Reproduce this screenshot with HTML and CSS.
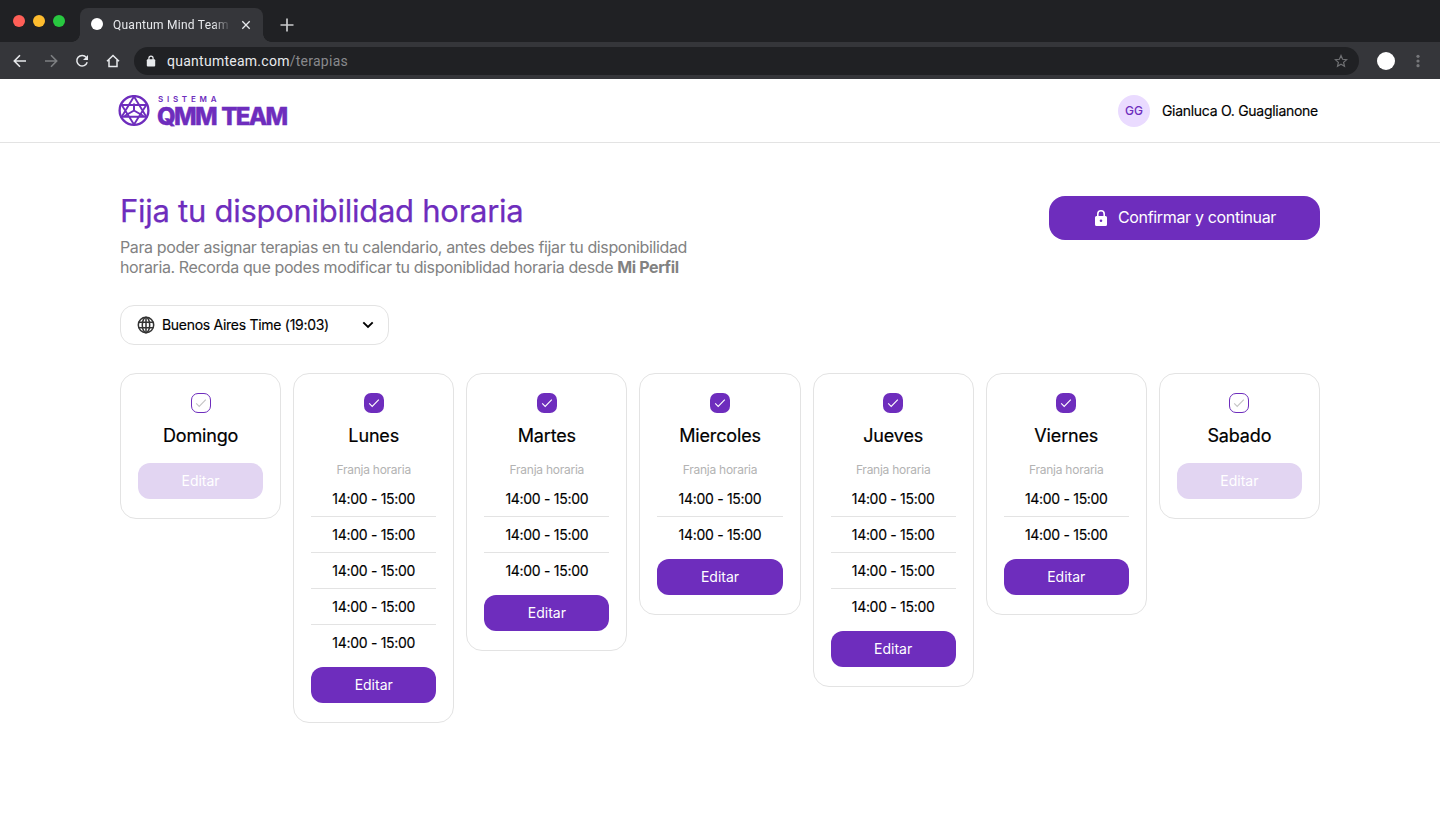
FILE: index.html
```
<!DOCTYPE html>
<html lang="es">
<head>
<meta charset="utf-8">
<title>Quantum Mind Team</title>
<link rel="stylesheet" href="styles.css">
</head>
<body>
<svg class="defs" width="0" height="0" aria-hidden="true">
  <symbol id="tick" viewBox="0 0 12 12"><path d="M1.2 6.4l3 3L10.8 2.6" fill="none" stroke="currentColor" stroke-width="1.1"/></symbol>
  <symbol id="lock" viewBox="0 0 16 20"><path fill="currentColor" fill-rule="evenodd" d="M4 8V6a4 4 0 0 1 8 0v2h.5A1.500 1.500 0 0 1 14 9.500v7a1.500 1.500 0 0 1-1.500 1.500h-9A1.500 1.500 0 0 1 2 16.500v-7A1.500 1.500 0 0 1 3.500 8zM5.600 8h4.800V6a2.400 2.400 0 0 0-4.800 0zM8 11.500a1.300 1.300 0 1 0 0 2.600 1.300 1.300 0 0 0 0-2.600z"/></symbol>
</svg>

<div class="tabs">
  <div class="lights"><i class="red"></i><i class="yellow"></i><i class="green"></i></div>
  <div class="tab">
    <i class="favicon"></i>
    <span class="tab-title">Quantum Mind Team</span>
    <svg class="tab-close" width="10" height="10" viewBox="0 0 10 10"><path d="M1.300 1.300l7.400 7.400M8.700 1.300L1.300 8.700" stroke="#e8eaed" stroke-width="1.300"/></svg>
  </div>
  <svg class="tab-new" width="14" height="14" viewBox="0 0 14 14"><path d="M7 .5v13M.5 7h13" stroke="#c9cacc" stroke-width="1.700"/></svg>
</div>
<div class="toolbar">
  <div class="nav">
    <svg width="14" height="14" viewBox="0 0 14 14"><path d="M13 7H1.800M7 1.300L1.300 7 7 12.700" fill="none" stroke="#e8eaed" stroke-width="1.600"/></svg>
    <svg width="14" height="14" viewBox="0 0 14 14"><path d="M1 7h11.200M7 1.300L12.700 7 7 12.700" fill="none" stroke="#7e8083" stroke-width="1.600"/></svg>
    <svg width="14" height="14" viewBox="0 0 14 14"><path d="M11.300 3.400A5.300 5.300 0 1 0 12.200 8.300" fill="none" stroke="#e8eaed" stroke-width="1.500"/><path d="M13 1v5H8z" fill="#e8eaed"/></svg>
    <svg width="14" height="14" viewBox="0 0 14 14"><path d="M1 7.200L7 1.500l6 5.700M3 6v6.500h8V6" fill="none" stroke="#e8eaed" stroke-width="1.500"/></svg>
  </div>
  <div class="address">
    <svg width="10" height="12" viewBox="0 0 10 12"><path d="M2.900 5V3.200a2.100 2.100 0 0 1 4.200 0V5" fill="none" stroke="#e8eaed" stroke-width="1.200"/><rect x=".8" y="4.300" width="8.400" height="7.200" rx="1" fill="#e8eaed"/></svg>
    <span class="url">quantumteam.com<span class="path">/terapias</span></span>
    <svg class="star" width="14" height="14" viewBox="0 0 14 14"><path d="M7 1.600l1.600 3.700 4 .4-3 2.700.9 3.900L7 10.200l-3.500 2.100.9-3.900-3-2.700 4-.4z" fill="none" stroke="#6f7073" stroke-width="1.200"/></svg>
  </div>
  <i class="profile"></i>
  <svg class="kebab" width="4" height="14" viewBox="0 0 4 14" fill="#77787b"><circle cx="2" cy="2.300" r="1.600"/><circle cx="2" cy="7" r="1.600"/><circle cx="2" cy="11.700" r="1.600"/></svg>
</div>

<header class="header">
  <div class="logo">
    <svg width="32" height="32" viewBox="0 0 32 32" fill="none" stroke="#6e2dbd">
      <circle cx="16" cy="15.500" r="14.400" stroke-width="2.300"/>
      <path d="M16 1.500L28.300 21.800H3.700zM16 29.500L3.700 10h24.600z" stroke-width="1.900"/>
      <path d="M16 8.500v7L6.500 21M16 15.500l9.500 5.500" stroke-width="2"/>
    </svg>
    <div class="wordmark"><span class="over">SISTEMA</span><span class="brand">QMM TEAM</span></div>
  </div>
  <div class="user"><span class="avatar">GG</span><span class="user-name">Gianluca O. Guaglianone</span></div>
</header>

<main class="main">
  <div class="intro">
    <div>
      <h1 class="title">Fija tu disponibilidad horaria</h1>
      <p class="lead">Para poder asignar terapias en tu calendario, antes debes fijar tu disponibilidad<br>horaria. Recorda que podes modificar tu disponiblidad horaria desde <b>Mi Perfil</b></p>
    </div>
    <button class="confirm"><svg width="16" height="20"><use href="#lock"/></svg><span>Confirmar y continuar</span></button>
  </div>

  <button class="zone">
    <svg width="18" height="18" viewBox="0 0 18 18" fill="none" stroke="#333" stroke-width="1.500"><circle cx="9" cy="9" r="7.700"/><ellipse cx="9" cy="9" rx="3.700" ry="7.700"/><path d="M9 1.300v15.400M1.800 6.300h14.400M1.800 11.700h14.400"/></svg>
    <span class="zone-name">Buenos Aires Time (19:03)</span>
    <svg class="chevron" width="12" height="8" viewBox="0 0 12 8"><path d="M1.300 1.300L6 6l4.700-4.700" fill="none" stroke="#000" stroke-width="1.900"/></svg>
  </button>

  <section class="week">
    <article class="day off"><span class="check"><svg width="12" height="12"><use href="#tick"/></svg></span><h2>Domingo</h2><button class="edit">Editar</button></article>
    <article class="day"><span class="check"><svg width="12" height="12"><use href="#tick"/></svg></span><h2>Lunes</h2><p class="range">Franja horaria</p><ul class="slots"><li>14:00 - 15:00</li><li>14:00 - 15:00</li><li>14:00 - 15:00</li><li>14:00 - 15:00</li><li>14:00 - 15:00</li></ul><button class="edit">Editar</button></article>
    <article class="day"><span class="check"><svg width="12" height="12"><use href="#tick"/></svg></span><h2>Martes</h2><p class="range">Franja horaria</p><ul class="slots"><li>14:00 - 15:00</li><li>14:00 - 15:00</li><li>14:00 - 15:00</li></ul><button class="edit">Editar</button></article>
    <article class="day"><span class="check"><svg width="12" height="12"><use href="#tick"/></svg></span><h2>Miercoles</h2><p class="range">Franja horaria</p><ul class="slots"><li>14:00 - 15:00</li><li>14:00 - 15:00</li></ul><button class="edit">Editar</button></article>
    <article class="day"><span class="check"><svg width="12" height="12"><use href="#tick"/></svg></span><h2>Jueves</h2><p class="range">Franja horaria</p><ul class="slots"><li>14:00 - 15:00</li><li>14:00 - 15:00</li><li>14:00 - 15:00</li><li>14:00 - 15:00</li></ul><button class="edit">Editar</button></article>
    <article class="day"><span class="check"><svg width="12" height="12"><use href="#tick"/></svg></span><h2>Viernes</h2><p class="range">Franja horaria</p><ul class="slots"><li>14:00 - 15:00</li><li>14:00 - 15:00</li></ul><button class="edit">Editar</button></article>
    <article class="day off"><span class="check"><svg width="12" height="12"><use href="#tick"/></svg></span><h2>Sabado</h2><button class="edit">Editar</button></article>
  </section>
</main>
</body>
</html>
```

FILE: styles.css
```
* { box-sizing: border-box; margin: 0; padding: 0; }
body { font-family: Inter, "Open Sans", sans-serif; background: #fff; color: #000; height: 838px; overflow: hidden; }
button { font: inherit; border: 0; white-space: nowrap; color: #000; }
svg { flex: none; display: block; }
.defs { position: absolute; }

.tabs { height: 42px; background: #202124; display: flex; align-items: flex-end; }
.lights { display: flex; gap: 8px; padding-left: 13px; width: 80px; margin-bottom: 15px; }
.lights i { width: 12px; height: 12px; border-radius: 50%; }
.red { background: #ff5f57; }
.yellow { background: #febc2e; }
.green { background: #28c840; }
.tab { position: relative; width: 183px; height: 34px; border-radius: 8px 8px 0 0; background: #35363a; display: flex; align-items: center; padding: 0 12px 0 11px; }
.tab::before, .tab::after { content: ""; position: absolute; bottom: 0; width: 8px; height: 8px; }
.tab::before { left: -8px; background: radial-gradient(circle at 0 0, transparent 7.5px, #35363a 8px); }
.tab::after { right: -8px; background: radial-gradient(circle at 100% 0, transparent 7.5px, #35363a 8px); }
.favicon { width: 12px; height: 12px; border-radius: 50%; background: #fff; margin-top: -2px; }
.tab-title { font: 12px/16px Roboto, sans-serif; letter-spacing: .25px; color: #e8eaed; margin-left: 10px; width: 116px; white-space: nowrap; -webkit-mask-image: linear-gradient(90deg, #000 86%, transparent 102%); mask-image: linear-gradient(90deg, #000 86%, transparent 102%); }
.tab-close { margin-left: auto; }
.tab-new { margin: 0 0 10px 17px; }

.toolbar { height: 37px; background: #35363a; display: flex; align-items: center; }
.nav { display: flex; gap: 17px; padding-left: 13px; width: 134px; }
.address { width: 1225px; height: 28px; border-radius: 14px; background: #202124; display: flex; align-items: center; padding: 0 11px 0 12px; }
.url { font: 14px/18px Roboto, sans-serif; letter-spacing: .26px; color: #e8eaed; margin-left: 11px; }
.path { color: #88898c; }
.star { margin-left: auto; }
.profile { width: 18px; height: 18px; border-radius: 50%; background: #fff; margin-left: 18px; }
.kebab { margin-left: 21px; }

.header { height: 64px; border-bottom: 1px solid #e3e3e3; padding: 0 122px 0 118px; display: flex; align-items: center; justify-content: space-between; }
.logo { display: flex; align-items: center; gap: 7px; color: #6e2dbd; }
.wordmark { display: flex; flex-direction: column; }
.over { font-size: 8px; line-height: 8px; font-weight: 600; letter-spacing: 3.75px; padding-left: 1px; }
.brand { font-size: 24px; line-height: 18px; margin: 5px 0 0; font-weight: 800; letter-spacing: -1.75px; word-spacing: 2px; white-space: nowrap; -webkit-text-stroke: .4px #6e2dbd; }
.user { display: flex; align-items: center; gap: 12px; }
.avatar { width: 32px; height: 32px; border-radius: 50%; background: #eadbff; color: #6e2dbd; font-size: 12px; font-weight: 500; letter-spacing: -.2px; display: flex; align-items: center; justify-content: center; }
.user-name { font-size: 14px; font-weight: 400; letter-spacing: -.28px; -webkit-text-stroke: .15px #000; }

.main { padding: 49px 120px 0; }
.intro { display: flex; justify-content: space-between; align-items: flex-start; height: 113px; }
.title { font-size: 31px; line-height: 38px; font-weight: 400; color: #6e2dbd; letter-spacing: -.27px; white-space: nowrap; -webkit-text-stroke: .25px #6e2dbd; }
.lead { margin-top: 7px; font-size: 16px; line-height: 20px; color: #828282; white-space: nowrap; letter-spacing: -.385px; }
.lead b { font-weight: 700; }
.confirm { width: 271px; height: 44px; margin-top: 4px; border-radius: 16px; background: #6e2dbd; color: #fff; font-size: 16px; letter-spacing: -.33px; padding-bottom: 2px; display: flex; align-items: center; justify-content: center; gap: 9px; }
.confirm svg { margin-top: 2px; }

.zone { width: 269px; height: 40px; border: 1px solid #e3e3e3; border-radius: 14px; background: #fff; display: flex; align-items: center; padding: 0 14px 0 16px; }
.zone-name { margin: -2px 0 0 7px; font-size: 14px; font-weight: 400; letter-spacing: -.29px; -webkit-text-stroke: .15px #000; }
.chevron { margin-left: auto; }

.week { margin-top: 28px; display: grid; grid-template-columns: repeat(7, 1fr); gap: 12px; align-items: start; }
.day { border: 1px solid #e3e3e3; border-radius: 16px; padding: 19px 17px; display: flex; flex-direction: column; align-items: center; }
.check { width: 20px; height: 20px; border-radius: 7px; background: #6e2dbd; color: #fff; display: flex; align-items: center; justify-content: center; }
.day h2 { margin-top: 11px; font-size: 18px; line-height: 24px; font-weight: 400; letter-spacing: -.15px; -webkit-text-stroke: .2px #000; }
.range { margin-top: 14px; font-size: 12px; line-height: 16px; color: #b3b3b3; letter-spacing: -.25px; }
.slots { list-style: none; width: 100%; margin-top: 3px; }
.slots li { height: 36px; line-height: 36px; text-align: center; font-size: 14px; font-weight: 400; letter-spacing: -.3px; -webkit-text-stroke: .15px #000; border-bottom: 1px solid #e3e3e3; }
.slots li:last-child { border-bottom: 0; }
.edit { width: 100%; height: 36px; margin-top: 6px; padding-bottom: 2px; border-radius: 12px; background: #6e2dbd; color: #fff; font-size: 14px; }
.off .check { background: #fff; border: 1px solid #6e2dbd; color: #c4c4c4; }
.off .edit { margin-top: 15px; background: #e2d5f2; }
```
